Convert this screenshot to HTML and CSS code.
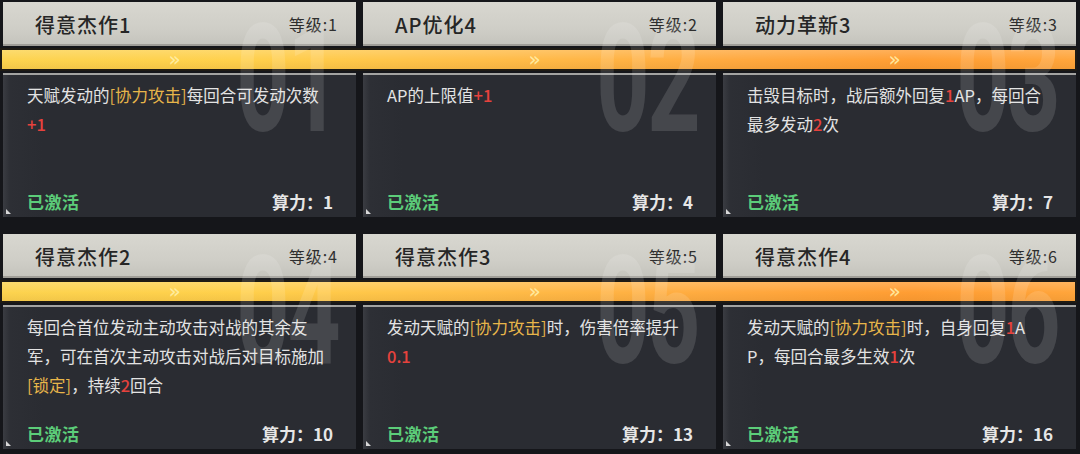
FILE: index.html
```html
<!DOCTYPE html>
<html lang="zh-CN">
<head>
  <meta charset="UTF-8" />
  <meta name="viewport" content="width=device-width, initial-scale=1.0" />
  <title>天赋列表</title>
  <link rel="stylesheet" href="styles.css">
</head>
<body>
  <main class="board">
    <section class="row">
      <div class="head c1"><h2 class="title">得意杰作1</h2><span class="level">等级:1</span></div>
      <div class="head c2"><h2 class="title">AP优化4</h2><span class="level">等级:2</span></div>
      <div class="head c3"><h2 class="title">动力革新3</h2><span class="level">等级:3</span></div>

      <div class="bar"><span>»</span><span>»</span><span>»</span></div>

      <div class="body c1">
        <p class="desc">天赋发动的<em class="tag">[协力攻击]</em>每回合可发动次数<br><b class="num">+1</b></p>
        <div class="foot"><span class="state">已激活</span><span class="cost">算力：1</span></div>
      </div>
      <div class="body c2">
        <p class="desc">AP的上限值<b class="num">+1</b></p>
        <div class="foot"><span class="state">已激活</span><span class="cost">算力：4</span></div>
      </div>
      <div class="body c3">
        <p class="desc">击毁目标时，战后额外回复<b class="num">1</b>AP，每回合<br>最多发动<b class="num">2</b>次</p>
        <div class="foot"><span class="state">已激活</span><span class="cost">算力：7</span></div>
      </div>

      <span class="mark c1" aria-hidden="true">01</span>
      <span class="mark c2" aria-hidden="true">02</span>
      <span class="mark c3" aria-hidden="true">03</span>
    </section>

    <section class="row">
      <div class="head c1"><h2 class="title">得意杰作2</h2><span class="level">等级:4</span></div>
      <div class="head c2"><h2 class="title">得意杰作3</h2><span class="level">等级:5</span></div>
      <div class="head c3"><h2 class="title">得意杰作4</h2><span class="level">等级:6</span></div>

      <div class="bar"><span>»</span><span>»</span><span>»</span></div>

      <div class="body c1">
        <p class="desc">每回合首位发动主动攻击对战的其余友<br>军，可在首次主动攻击对战后对目标施加<br><em class="tag">[锁定]</em>，持续<b class="num">2</b>回合</p>
        <div class="foot"><span class="state">已激活</span><span class="cost">算力：10</span></div>
      </div>
      <div class="body c2">
        <p class="desc">发动天赋的<em class="tag">[协力攻击]</em>时，伤害倍率提升<br><b class="num">0.1</b></p>
        <div class="foot"><span class="state">已激活</span><span class="cost">算力：13</span></div>
      </div>
      <div class="body c3">
        <p class="desc">发动天赋的<em class="tag">[协力攻击]</em>时，自身回复<b class="num">1</b>A<br>P，每回合最多生效<b class="num">1</b>次</p>
        <div class="foot"><span class="state">已激活</span><span class="cost">算力：16</span></div>
      </div>

      <span class="mark c1" aria-hidden="true">04</span>
      <span class="mark c2" aria-hidden="true">05</span>
      <span class="mark c3" aria-hidden="true">06</span>
    </section>
  </main>
</body>
</html>
```

FILE: styles.css
```css
html, body {
  margin: 0;
  padding: 0;
  background: #15161a;
  font-family: "Noto Sans CJK SC", "Noto Sans", sans-serif;
  overflow: hidden;
}
.board {
  display: flex;
  flex-direction: column;
  gap: 17px;
  padding-top: 2px;
}
.row {
  display: grid;
  grid-template-columns: repeat(3, 353px);
  grid-template-rows: 44px 27px 144px;
  column-gap: 7px;
  padding: 0 3px;
}
.c1 { grid-column: 1; }
.c2 { grid-column: 2; }
.c3 { grid-column: 3; }

/* header */
.head {
  grid-row: 1;
  display: flex;
  align-items: center;
  justify-content: space-between;
  padding: 0 18px 0 32px;
  background: linear-gradient(180deg, #d8d7d0 0%, #cfcec7 60%, #c4c3bc 100%);
  box-shadow: inset 0 -2px 0 #9f9d97;
}
.title {
  margin: 0;
  font-size: 20px;
  font-weight: 500;
  letter-spacing: 1px;
  color: #262626;
}
.level {
  font-size: 16px;
  letter-spacing: 1px;
  color: #2e2e2e;
}

/* orange strip */
.bar {
  grid-row: 2;
  grid-column: 1 / -1;
  margin: 2px -1px 2px -3px;
  display: grid;
  grid-template-columns: repeat(3, 353px);
  column-gap: 7px;
  padding-left: 1px;
  border: 2px solid #1f1b14;
  background:
    linear-gradient(180deg, rgba(255, 255, 255, 0.18), rgba(255, 255, 255, 0) 55%, rgba(120, 60, 0, 0.08)),
    linear-gradient(90deg, #fcd34f 0%, #ffd04b 22%, #ffbd48 45%, #ffa93f 68%, #ff9d33 85%, #ffa53b 100%);
}
.bar span {
  text-align: center;
  font-family: "DejaVu Sans", sans-serif;
  font-size: 20px;
  line-height: 19px;
  color: rgba(255, 240, 170, 0.9);
  padding-right: 10px;
}

/* body */
.body {
  grid-row: 3;
  position: relative;
  display: flex;
  flex-direction: column;
  padding: 6px 23px 3px 24px;
  border-top: 2px solid #a3a3a1;
  background: linear-gradient(90deg, #3a3c42 0, #2d2f35 7px, #2a2c32 40px);
}
.body::after {
  content: "";
  position: absolute;
  left: 3px;
  bottom: 3px;
  border-left: 5px solid #d8d8d8;
  border-top: 5px solid transparent;
}
.desc {
  margin: 0;
  font-size: 16.5px;
  line-height: 29px;
  color: #e3e3e3;
}
.tag {
  font-style: normal;
  color: #e8b64a;
}
.num {
  font-weight: 500;
  color: #e6423d;
}
.foot {
  margin-top: auto;
  display: flex;
  justify-content: space-between;
  align-items: center;
  line-height: 24px;
}
.state {
  font-size: 17px;
  font-weight: 700;
  color: #5ccd79;
  letter-spacing: 0.5px;
}
.cost {
  font-size: 17px;
  font-weight: 700;
  color: #e6e6e6;
}

/* faded index number */
.mark {
  grid-row: 1 / 4;
  align-self: start;
  justify-self: end;
  margin: 23px 18px 0 0;
  font-family: Roboto, "Liberation Sans", sans-serif;
  font-size: 150px;
  font-weight: 700;
  line-height: 110px;
  letter-spacing: -4px;
  color: rgba(255, 255, 255, 0.13);
  transform: scaleX(0.62);
  transform-origin: right top;
  pointer-events: none;
}
```
